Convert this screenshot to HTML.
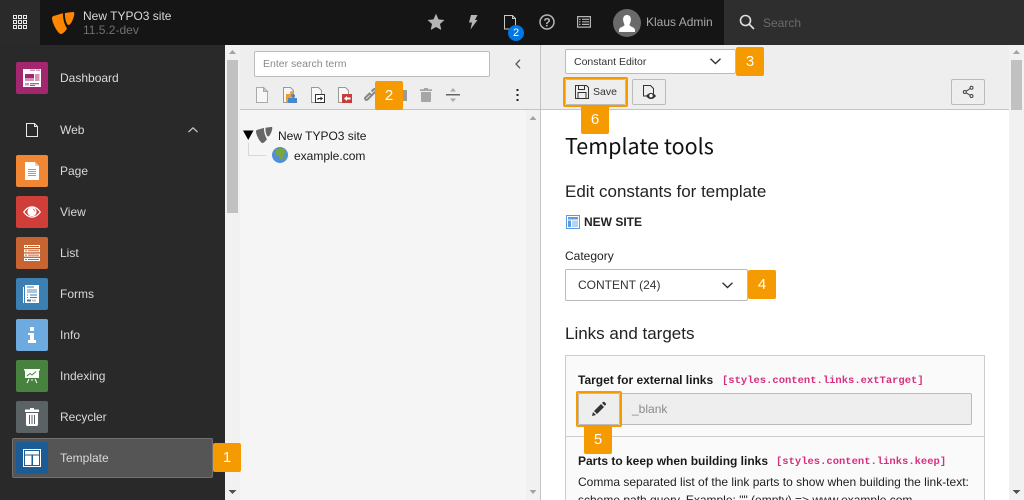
<!DOCTYPE html>
<html style="width:1024px;height:500px;overflow:hidden"><head><meta charset="utf-8"><style>
html,body{margin:0;padding:0}
body{width:1024px;height:500px;overflow:hidden;position:relative;background:#fff;font-family:"Liberation Sans",sans-serif;font-size:12px;color:#212121}
#w{position:absolute;left:0;top:0;width:1024px;height:500px;overflow:hidden}
.a{position:absolute}
.t{position:absolute;white-space:nowrap;line-height:16px}
.mi{position:absolute;left:16px;width:32px;height:32px;border-radius:2px}
.ml{position:absolute;left:60px;color:#d9d9d9;font-size:12px;line-height:16px;white-space:nowrap}
.n{position:absolute;z-index:5;width:28px;height:29px;background:#f59a00;color:#fff;font-size:15px;line-height:29px;text-align:center;border-radius:2px}
svg{position:absolute;overflow:visible}
.m{position:absolute;white-space:nowrap;line-height:16px;font-family:"Liberation Mono",monospace;font-size:10.5px;font-weight:bold;color:#d6307e}
</style></head><body><div id="w">
<!-- topbar -->
<div class="a" style="left:0;top:0;width:1024px;height:45px;background:#151515"></div>
<div class="a" style="left:0;top:0;width:40px;height:45px;background:#2a2a2a"></div>
<div class="a" style="left:724px;top:0;width:300px;height:45px;background:#2e2e2e"></div>
<svg style="left:13px;top:15px" width="14" height="14" fill="none" stroke="#e8e8e8" stroke-width="1"><path d="M.5.5h3v3h-3zM5.5.5h3v3h-3zM10.5.5h3v3h-3zM.5 5.5h3v3h-3zM5.5 5.5h3v3h-3zM10.5 5.5h3v3h-3zM.5 10.5h3v3h-3zM5.5 10.5h3v3h-3zM10.5 10.5h3v3h-3z"/></svg>
<svg style="left:52px;top:12px" width="23" height="23" fill="#ff8700"><path d="M0 6C0 5 .5 4.500 1.500 4L11 1.200C10.600 5 12 12 15 16.500 14 18.500 11 22 9 22 6 22 0 11 0 6z"/><path d="M13 1C16 .5 20 0 21.500 0 22 0 22.300.5 22.300 1.500 22.300 5 19 13 16.500 13 14.500 13 12.500 6 13 1z"/></svg>
<div class="t" style="left:83px;top:8px;color:#d9d9d9;font-size:12px">New TYPO3 site</div>
<div class="t" style="left:83px;top:22px;color:#707070;font-size:12px">11.5.2-dev</div>
<svg style="left:427px;top:13px" width="18" height="18"><path d="M9 .8l2.500 5.600 6 .6-4.500 4 1.300 6L9 14l-5.300 3 1.300-6L.5 7l6-.6z" fill="#b5b5b5"/></svg>
<svg style="left:468px;top:15px" width="10" height="15"><path d="M3 0h6.500L7 5h2.500L2.500 14.500 4 7.500H1z" fill="#b5b5b5"/></svg>
<svg style="left:504px;top:15px" width="12" height="15" fill="none" stroke="#c9c9c9"><path d="M.5.500h8l3 3v10.500H.5zM8.500.500v3h3"/></svg>
<div class="a" style="left:508px;top:25px;width:16px;height:16px;border-radius:8px;background:#0078e6;color:#fff;font-size:11px;line-height:16px;text-align:center">2</div>
<svg style="left:539px;top:14px" width="16" height="16"><circle cx="8" cy="8" r="7" fill="none" stroke="#b5b5b5" stroke-width="1.500"/><text x="8" y="12.500" font-family="Liberation Sans" font-size="12" font-weight="bold" fill="#b5b5b5" text-anchor="middle">?</text></svg>
<svg style="left:577px;top:16px" width="14" height="12" fill="none" stroke="#b5b5b5" stroke-width="1.200"><path d="M.6.600h12.800v10.500H.6zM5 3.300h7M5 5.800h7M5 8.400h7M2 3.300h1.500M2 5.800h1.500M2 8.400h1.500"/></svg>
<div class="a" style="left:613px;top:9px;width:28px;height:28px;border-radius:14px;background:#6a6a6a;overflow:hidden"><svg style="left:0;top:0" width="28" height="28"><path d="M14 6c2.700 0 3.900 2 3.900 4.500S16.500 15 16.500 16c0 1.500 5.500 2 5.500 5v2H6v-2c0-3 5.500-3.500 5.500-5 0-1-1.400-3-1.400-5.500S11.300 6 14 6z" fill="#fff"/></svg></div>
<div class="t" style="left:646px;top:14px;color:#a8a8a8;font-size:12px">Klaus Admin</div>
<svg style="left:739px;top:14px" width="16" height="16" fill="none" stroke="#e0e0e0" stroke-width="1.600"><circle cx="6.500" cy="6.500" r="5"/><path d="M10 10l5 5"/></svg>
<div class="t" style="left:763px;top:15px;color:#6b6b6b;font-size:12px">Search</div>

<!-- sidebar -->
<div class="a" style="left:0;top:45px;width:225px;height:455px;background:#292929"></div>
<div class="a" style="left:225px;top:45px;width:15px;height:455px;background:#f1f1f1"></div>
<div class="a" style="left:227px;top:60px;width:11px;height:153px;background:#c1c1c1"></div>
<svg style="left:225px;top:45px" width="15" height="455"><path d="M7.500 5l3.500 4H4z" fill="#a3a3a3"/><path d="M3.500 445h8l-4 4z" fill="#505050"/></svg>

<div class="mi" style="top:62px;background:#a2276f"></div>
<svg style="left:23px;top:69px" width="18" height="18"><path d="M0 0h18v18H0z" fill="#fff"/><path d="M7 .7h5v.8H7zM13 .7h4v.8h-4z" fill="#a2276f"/><path d="M2 5h9v4H2z" fill="#a2276f"/><path d="M2 9h9v3H2zM12 5h4.500v7H12z" fill="#d393b8"/><path d="M2 14h4v2.500H2z" fill="#d393b8"/><path d="M7 14.300h9v.9H7zM7 16h5v.9H7z" fill="#a2276f"/></svg>
<div class="ml" style="top:70px">Dashboard</div>

<svg style="left:26px;top:123px" width="12" height="14" fill="none" stroke="#e8e8e8"><path d="M.5.500h8l3 3v10H.5zM8.500.500v3h3"/></svg>
<div class="ml" style="top:122px">Web</div>
<svg style="left:188px;top:127px" width="10" height="6" fill="none" stroke="#c8c8c8" stroke-width="1.200"><path d="M.5 5L5 .8 9.500 5"/></svg>

<div class="mi" style="top:155px;background:#f08735"></div>
<svg style="left:25px;top:162px" width="14" height="18"><path d="M0 0h10l4 4v14H0z" fill="#fff"/><path d="M10 0l4 4h-4z" fill="#f8c9a3"/><path d="M3 7h8v1H3zM3 9h8v1H3zM3 11h8v1H3zM3 13h8v1H3z" fill="#f08735"/></svg>
<div class="ml" style="top:163px">Page</div>

<div class="mi" style="top:196px;background:#d03e39"></div>
<svg style="left:23px;top:206px" width="18" height="12"><path d="M0 6C3 1.800 6 .3 9 .3s6 1.500 9 5.700c-3 4.200-6 5.700-9 5.700S3 10.200 0 6z" fill="#fff"/><path d="M1.500 6C4 2.800 6.500 1.500 9 1.500s5 1.300 7.500 4.500c-2.500 3.200-5 4.500-7.500 4.500S4 9.200 1.500 6z" fill="#d03e39"/><circle cx="9" cy="5.700" r="4.600" fill="#fff"/><path d="M9.500 2.500a2.500 2.500 0 0 1 2 3.500c-.3-1.500-1-2.500-2-3.500z" fill="#d03e39"/></svg>
<div class="ml" style="top:204px">View</div>

<div class="mi" style="top:237px;background:#c86432"></div>
<svg style="left:24px;top:245px" width="16" height="16"><path d="M0 0h16v3H0zM0 4.300h16v3H0zM0 8.600h16v3H0zM0 13h16v3H0z" fill="#fff"/><path d="M4 1h11v1H4zM4 5.300h11v1H4zM4 9.600h11v1H4zM4 14h11v1H4zM1 1h2v1H1zM1 5.300h2v1H1zM1 9.600h2v1H1zM1 14h2v1H1z" fill="#c86432"/></svg>
<div class="ml" style="top:245px">List</div>

<div class="mi" style="top:278px;background:#3c7fb2"></div>
<svg style="left:23px;top:285px" width="16" height="18"><path d="M0 2h1v16H0z" fill="#fff"/><path d="M2 0h14v18H2z" fill="#fff"/><path d="M4 1.500h7v1H4z" fill="#3c7fb2"/><path d="M4 4h10v4H4z" fill="#a9c8e0"/><path d="M4 9.500h1v1H4zM4 12h1v1H4zM7 9.500h7v1H7zM7 12h7v1H7z" fill="#3c7fb2"/><path d="M4 14.500h4v2H4z" fill="#3c7fb2"/><path d="M9 14.500h4v2H9z" fill="#a9c8e0"/></svg>
<div class="ml" style="top:286px">Forms</div>

<div class="mi" style="top:319px;background:#6daae0"></div>
<svg style="left:28px;top:327px" width="8" height="16"><path d="M2 0h4v4H2zM0 6h6v7h2v3H0v-3h2V8H0z" fill="#fff"/></svg>
<div class="ml" style="top:327px">Info</div>

<div class="mi" style="top:360px;background:#47833f"></div>
<svg style="left:24px;top:369px" width="16" height="14"><path d="M0 0h16v1.500h-1V9H1V1.500H0z" fill="#fff"/><path d="M3 7l3-2.500 2 1.500 4-3.500" fill="none" stroke="#47833f"/><path d="M5 10L3 14M11 10l2 4M8 10v2" stroke="#fff"/></svg>
<div class="ml" style="top:368px">Indexing</div>

<div class="mi" style="top:401px;background:#5b6265"></div>
<svg style="left:25px;top:408px" width="14" height="18"><path d="M5 0h4v1.500h5V4H0V1.500h5zM1 5h12v11.500c0 .8-.7 1.500-1.500 1.500h-9C1.700 18 1 17.300 1 16.500z" fill="#fff"/><path d="M4 7h1v9H4zM6.500 7h1v9h-1zM9 7h1v9H9z" fill="#5b6265"/></svg>
<div class="ml" style="top:409px">Recycler</div>

<div class="a" style="left:12px;top:438px;width:199px;height:38px;background:#555;border:1px solid #717171;border-radius:2px"></div>
<div class="mi" style="top:442px;background:#1b5c96"></div>
<svg style="left:23px;top:449px" width="18" height="18"><path d="M.5.500h17v17H.5z" fill="none" stroke="#fff"/><path d="M2 2h14v3.500H2zM2 6.500h6.500V16H2zM10 6.500h6V16h-6z" fill="#fff"/></svg>
<div class="ml" style="top:450px">Template</div>
<div class="n" style="left:213px;top:443px">1</div>

<!-- tree panel -->
<div class="a" style="left:240px;top:45px;width:300px;height:65px;background:#eee;border-bottom:1px solid #c4c4c4;box-sizing:border-box"></div>
<div class="a" style="left:240px;top:110px;width:286px;height:390px;background:#f5f5f5"></div>
<div class="a" style="left:526px;top:110px;width:14px;height:390px;background:#f1f1f1"></div>
<svg style="left:526px;top:110px" width="14" height="390"><path d="M7 6l3.500 4h-7z" fill="#a3a3a3"/><path d="M3.500 380h7l-3.500 4z" fill="#a3a3a3"/></svg>
<div class="a" style="left:540px;top:45px;width:1px;height:455px;background:#c4c4c4"></div>
<div class="a" style="left:254px;top:51px;width:236px;height:26px;background:#fff;border:1px solid #bbb;border-radius:2px;box-sizing:border-box"></div>
<div class="t" style="left:263px;top:56px;color:#8a8a8a;font-size:10.500px;line-height:16px">Enter search term</div>
<svg style="left:515px;top:59px" width="6" height="10" fill="none" stroke="#555" stroke-width="1.300"><path d="M5 .8L1 5l4 4.200"/></svg>
<svg style="left:256px;top:87px" width="12" height="16" fill="none" stroke="#aaa"><path d="M.5.500h7l4 4v11H.5z" fill="#f7f7f7"/><path d="M7.500.500l4 4h-4z" fill="#ccc"/></svg>
<svg style="left:283px;top:87px" width="14" height="16"><path d="M.5.500h7l3 3v12H.5z" fill="#f7f7f7" stroke="#999"/><path d="M3 7h5v8H3z" fill="#e8a033"/><circle cx="9" cy="6" r="2" fill="#e8a033"/><path d="M5 11h9v5H5z" fill="#4c86c6"/><circle cx="10" cy="9" r="2" fill="#4c86c6"/></svg>
<svg style="left:311px;top:87px" width="14" height="16"><path d="M.5.500h7l3 3v12H.5z" fill="#f7f7f7" stroke="#999"/><path d="M4.500 7.500h9v8h-9z" fill="#fff" stroke="#333"/><path d="M6.500 13v-2h3V9.500l2.500 2-2.500 2V12H7.500v1z" fill="#222"/></svg>
<svg style="left:338px;top:87px" width="14" height="16"><path d="M.5.500h7l3 3v12H.5z" fill="#f7f7f7" stroke="#999"/><path d="M4 7h10v9H4z" fill="#c83c3c"/><path d="M6 11.500l3-2.500v1.500h3.500v2H9V14z" fill="#fff"/></svg>
<svg style="left:364px;top:88px" width="14" height="14" fill="none" stroke="#888" stroke-width="2"><path d="M1.500 9.500l4-4 2 2-4 4c-.6.600-1.400.600-2 0s-.6-1.400 0-2zM7.500 3.500l2-2c.6-.6 1.400-.6 2 0s.6 1.400 0 2l-4 4"/></svg>
<div class="a" style="left:402px;top:90px;width:5px;height:11px;background:#999"></div>
<svg style="left:420px;top:88px" width="12" height="14"><path d="M4 0h4v1.200h4V3H0V1.200h4zM1 4h10v9c0 .6-.4 1-1 1H2c-.6 0-1-.4-1-1z" fill="#a6a6a6"/></svg>
<svg style="left:446px;top:88px" width="14" height="14"><path d="M0 6h14v1.500H0z" fill="#666"/><path d="M7 0l3 3.500H4zM7 14l3-3.500H4z" fill="#aaa"/></svg>
<svg style="left:516px;top:89px" width="4" height="13"><path d="M.5 0h2v2h-2zM.5 5h2v2h-2zM.5 10h2v2h-2z" fill="#222"/></svg>
<div class="n" style="left:375px;top:81px">2</div>
<svg style="left:243px;top:128px" width="32" height="30"><path d="M0 2.500h10.500L5.250 12z" fill="#000"/><path d="M5.500 15v12.500H23" fill="none" stroke="#d8d8d8"/></svg>
<svg style="left:256px;top:127px" width="17" height="17"><g fill="#666" transform="scale(.73)"><path d="M0 6C0 5 .5 4.500 1.500 4L11 1.200C10.600 5 12 12 15 16.500 14 18.500 11 22 9 22 6 22 0 11 0 6z"/><path d="M13 1C16 .5 20 0 21.500 0 22 0 22.300.5 22.300 1.500 22.300 5 19 13 16.500 13 14.500 13 12.500 6 13 1z"/></g></svg>
<div class="t" style="left:278px;top:128px;font-size:12px;color:#1a1a1a">New TYPO3 site</div>
<svg style="left:272px;top:147px" width="16" height="16"><circle cx="8" cy="8" r="8" fill="#4f90d8"/><path d="M5 2c3-1.500 6-.8 8 1 1 2-.5 3-1 4.500S11 12 9 12.500 8.500 9 6 8.500 3 6.500 3.500 5 4 3 5 2z" fill="#79a73a"/><path d="M12 11l2-.5-1.500 3z" fill="#79a73a"/></svg>
<div class="t" style="left:294px;top:148px;font-size:12px;color:#1a1a1a">example.com</div>

<!-- doc header -->
<div class="a" style="left:541px;top:45px;width:468px;height:65px;background:#eee;border-bottom:1px solid #c4c4c4;box-sizing:border-box"></div>
<div class="a" style="left:565px;top:49px;width:171px;height:25px;background:#fff;border:1px solid #bbb;border-radius:2px;box-sizing:border-box"></div>
<div class="t" style="left:574px;top:54px;font-size:10.500px;color:#333">Constant Editor</div>
<svg style="left:710px;top:58px" width="11" height="7" fill="none" stroke="#333" stroke-width="1.400"><path d="M.5.800L5.500 5.500l5-4.700"/></svg>
<div class="n" style="left:736px;top:47px">3</div>
<div class="a" style="left:563px;top:77px;width:65px;height:30px;border:2px solid #f59a00;border-radius:2px;box-sizing:border-box;background:#eee"></div>
<div class="a" style="left:565px;top:79px;width:61px;height:26px;border:1px solid #bbb;border-radius:2px;box-sizing:border-box;background:#eee"></div>
<svg style="left:575px;top:85px" width="14" height="14" fill="none" stroke="#333"><path d="M.5.500h11l2 2v11H.5z"/><path d="M3.500.500v4h6v-4M3 13.500v-6h8v6"/></svg>
<div class="t" style="left:593px;top:84px;font-size:10.500px;color:#333">Save</div>
<div class="a" style="left:632px;top:79px;width:34px;height:26px;border:1px solid #bbb;border-radius:2px;box-sizing:border-box;background:#eee"></div>
<svg style="left:643px;top:85px" width="15" height="15"><path d="M.5.500h7l3 3v7.500H.5z" fill="none" stroke="#333"/><path d="M3 11c2-2.500 3.500-3 5-3s3 .5 5 3c-2 2.500-3.500 3-5 3s-3-.5-5-3z" fill="#333"/><circle cx="8" cy="10.700" r="1.700" fill="#fff"/></svg>
<div class="n" style="left:581px;top:105px">6</div>
<div class="a" style="left:951px;top:79px;width:34px;height:26px;border:1px solid #bbb;border-radius:2px;box-sizing:border-box;background:#eee"></div>
<svg style="left:963px;top:86px" width="11" height="12" fill="none" stroke="#444"><circle cx="8.500" cy="1.800" r="1.500"/><circle cx="1.800" cy="6" r="1.500"/><circle cx="8.500" cy="10" r="1.500"/><path d="M3.100 5.200l4.100-2.600M3.100 6.800l4.100 2.500"/></svg>

<!-- right scrollbar -->
<div class="a" style="left:1009px;top:45px;width:15px;height:455px;background:#f1f1f1"></div>
<div class="a" style="left:1011px;top:60px;width:11px;height:50px;background:#c1c1c1"></div>
<svg style="left:1009px;top:45px" width="15" height="455"><path d="M7.500 5l3.500 4H4z" fill="#a3a3a3"/><path d="M3.500 445h8l-4 4z" fill="#505050"/></svg>

<!-- content -->
<div class="t" style="left:565px;top:131px;font-family:'Noto Sans CJK SC',sans-serif;font-size:21.500px;line-height:30px;color:#111">Template tools</div>
<div class="t" style="left:565px;top:182px;font-size:17px;line-height:20px;color:#222">Edit constants for template</div>
<svg style="left:566px;top:215px" width="14" height="14"><path d="M.5.500h13v13H.5z" fill="#fff" stroke="#5b9be6"/><path d="M2 2h10v2.500H2zM2 5.500h3V12H2z" fill="#5b9be6"/><path d="M6 5.500h6V12H6z" fill="#b3d4f5"/></svg>
<div class="t" style="left:584px;top:214px;font-size:12px;font-weight:bold;color:#222">NEW SITE</div>
<div class="t" style="left:565px;top:248px;font-size:12px;color:#222">Category</div>
<div class="a" style="left:565px;top:269px;width:183px;height:32px;background:#fff;border:1px solid #bbb;border-radius:2px;box-sizing:border-box"></div>
<div class="t" style="left:578px;top:277px;font-size:12px;color:#333">CONTENT (24)</div>
<svg style="left:722px;top:282px" width="11" height="7" fill="none" stroke="#333" stroke-width="1.400"><path d="M.5.800L5.500 5.500l5-4.700"/></svg>
<div class="n" style="left:748px;top:270px">4</div>
<div class="t" style="left:565px;top:324px;font-size:17px;line-height:20px;color:#222">Links and targets</div>

<div class="a" style="left:565px;top:355px;width:420px;height:160px;background:#fafafa;border:1px solid #ccc;box-sizing:border-box"></div>
<div class="a" style="left:566px;top:436px;width:418px;height:1px;background:#ccc"></div>
<div class="t" style="left:578px;top:372px;font-size:12px;font-weight:bold;color:#1a1a1a">Target for external links</div>
<div class="m" style="left:722px;top:373px">[styles.content.links.extTarget]</div>
<div class="a" style="left:578px;top:393px;width:394px;height:32px;background:#eee;border:1px solid #bbb;border-radius:2px;box-sizing:border-box"></div>
<div class="a" style="left:576px;top:391px;width:46px;height:36px;border:2px solid #f59a00;border-radius:2px;box-sizing:border-box;background:#eee"></div>
<div class="a" style="left:578px;top:393px;width:42px;height:32px;border:1px solid #bbb;border-radius:2px;box-sizing:border-box;background:#eee"></div>
<svg style="left:592px;top:402px" width="14" height="14"><path d="M0 14l1-4 3 3zM2 9l7-7 3 3-7 7zM10 1l1-1c.5-.3 1-.3 1.400 0l1.400 1.400c.3.500.3 1 0 1.400l-1 1z" fill="#333"/></svg>
<div class="t" style="left:632px;top:401px;font-size:12px;color:#8a8a8a">_blank</div>
<div class="n" style="left:584px;top:425px;height:29px">5</div>
<div class="t" style="left:578px;top:453px;font-size:12px;font-weight:bold;color:#1a1a1a">Parts to keep when building links</div>
<div class="m" style="left:776px;top:454px">[styles.content.links.keep]</div>
<div class="t" style="left:578px;top:474px;font-size:12px;color:#222">Comma separated list of the link parts to show when building the link-text:</div>
<div class="t" style="left:578px;top:492px;font-size:12px;color:#222">scheme,path,query. Example: "" (empty) =&gt; www.example.com</div>
</div></body></html>
